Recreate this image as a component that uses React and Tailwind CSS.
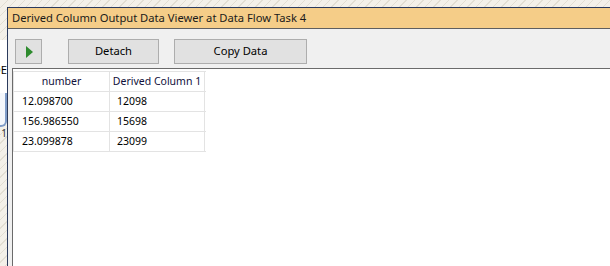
import React from "react";

const hatch =
  "bg-[repeating-linear-gradient(135deg,#f3f0e9_0px,#f3f0e9_5px,#e2ded3_5px,#e2ded3_6px)]";

function Btn({ children, className }) {
  return (
    <div
      className={
        "h-[25px] border border-[#adadad] bg-[#e1e1e1] flex items-center justify-center text-[11.2px] text-black " +
        className
      }
    >
      {children}
    </div>
  );
}

const rows = [
  ["12.098700", "12098"],
  ["156.986550", "15698"],
  ["23.099878", "23099"],
];

export default function App() {
  return (
    <div
      className={"flex w-[610px] h-[266px] overflow-hidden " + hatch}
      style={{ fontFamily: '"Noto Sans", "Open Sans", sans-serif' }}
    >
      {/* background window peeking at left */}
      <div className="w-[7px] shrink-0 flex flex-col">
        <div className="h-[40px]" />
        <div className="h-[53px] bg-white overflow-hidden relative">
          <span className="absolute right-[0px] top-[23px] text-[11.2px] leading-[14px] text-black whitespace-nowrap">
            DE
          </span>
        </div>
        <div className="h-[34px] bg-[#f4f7fc] border-r-2 border-b-2 border-[#7f9cc8] rounded-br-[6px]" />
        <div className="h-[14px] relative">
          <span className="absolute right-[0px] top-[0px] text-[10px] leading-[12px] text-[#333]">1</span>
        </div>
        <div className="flex-1" />
      </div>

      {/* main window */}
      <div className="flex-1 pt-[7px] flex flex-col">
        <div className="flex-1 flex flex-col border-t border-l border-[#2b3a5c] bg-[#f0f0f0]">
          {/* title bar */}
          <div className="h-[21px] shrink-0 bg-[#f5cd88] border-b border-[#5f5f5f] pl-[4px] flex items-center text-[11.2px] text-[#1a1a1a] whitespace-nowrap">
            Derived Column Output Data Viewer at Data Flow Task 4
          </div>
          {/* toolbar */}
          <div className="h-[39px] shrink-0 bg-[#f0f0f0] flex items-start pt-[10px] pl-[7px]">
            <Btn className="w-[27px]">
              <svg width="8" height="12" viewBox="0 0 8 12">
                <polygon points="1,0 8,6 1,12" fill="#2e8b2e" />
              </svg>
            </Btn>
            <Btn className="w-[91px] ml-[26px]">Detach</Btn>
            <Btn className="w-[133px] ml-[15px]">Copy Data</Btn>
          </div>
          {/* content */}
          <div className="flex-1 flex pl-[4px]">
            <div className="flex-1 border-t border-l border-[#6b6b6b] bg-white pt-[2px]">
              <div className="w-[193px] border-t border-l border-[#e3e3e3] text-[10.5px] text-black">
                <div className="flex h-[20px] border-b border-[#e3e3e3]">
                  <div className="w-[96px] border-r border-[#e3e3e3] flex items-center justify-center text-[#10103a]">
                    number
                  </div>
                  <div className="w-[95px] border-r border-[#e3e3e3] flex items-center justify-center text-[#10103a] whitespace-nowrap">
                    Derived Column 1
                  </div>
                </div>
                {rows.map((r) => (
                  <div key={r[0]} className="flex h-[20px] border-b border-[#e3e3e3]">
                    <div className="w-[96px] border-r border-[#e3e3e3] flex items-center pl-[8px]">
                      {r[0]}
                    </div>
                    <div className="w-[95px] border-r border-[#e3e3e3] flex items-center pl-[7px]">
                      {r[1]}
                    </div>
                  </div>
                ))}
              </div>
            </div>
          </div>
        </div>
      </div>
    </div>
  );
}
